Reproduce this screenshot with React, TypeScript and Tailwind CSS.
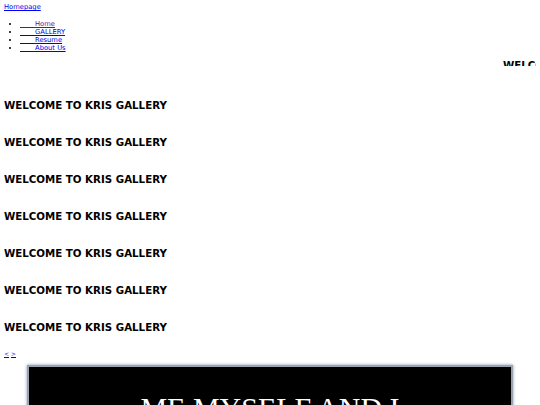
import React from 'react';

const navItems = [
  { label: 'Home', visited: true },
  { label: 'GALLERY', visited: false },
  { label: 'Resume', visited: false },
  { label: 'About Us', visited: false },
];

export default function App() {
  return (
    <div className="h-[405px] bg-white text-black overflow-hidden" style={{ fontFamily: '"DejaVu Sans", sans-serif' }}>
      <div className="px-1 pt-[3px] text-[6.75px] leading-[9px]">
        <a href="#" className="text-[#0000ee] underline">Homepage</a>
      </div>

      <ul className="mt-[8px] pl-[20px] list-disc text-[6.75px] leading-[8px]">
        {navItems.map((item) => (
          <li key={item.label}>
            <a href="#" className={`underline ${item.visited ? 'text-[#551a8b]' : 'text-[#0000ee]'}`}>
              {'\u00a0\u00a0\u00a0\u00a0\u00a0\u00a0\u00a0'}{item.label}
            </a>
          </li>
        ))}
      </ul>

      <div className="mt-0 h-[14px] w-[536px] pl-[503px] overflow-hidden whitespace-nowrap">
        <span className="text-[10.25px] font-bold leading-[14px]">WELCOME TO KRIS GALLERY</span>
      </div>

      <div className="flex flex-col gap-[23px] mt-[32px] px-1">
        {Array.from({ length: 7 }).map((_, i) => (
          <h3 key={i} className="text-[10.25px] font-bold leading-[14px] whitespace-nowrap">
            WELCOME TO KRIS GALLERY
          </h3>
        ))}
      </div>

      <div className="mt-[16px] px-1 text-[6px] leading-[8px]">
        <a href="#" className="text-[#0000ee] underline">&lt;</a>{' '}
        <a href="#" className="text-[#0000ee] underline">&gt;</a>
      </div>

      <div className="mt-[7px] mx-[27px] bg-black border-2 border-[#9aa3b0] shadow-[0_0_3px_#8895a8] h-[80px] flex justify-center pt-[23px]">
        <span className="text-white text-[30px] leading-[36px] whitespace-nowrap" style={{ fontFamily: '"Liberation Serif", serif' }}>
          ME MYSELF AND I
        </span>
      </div>
    </div>
  );
}
